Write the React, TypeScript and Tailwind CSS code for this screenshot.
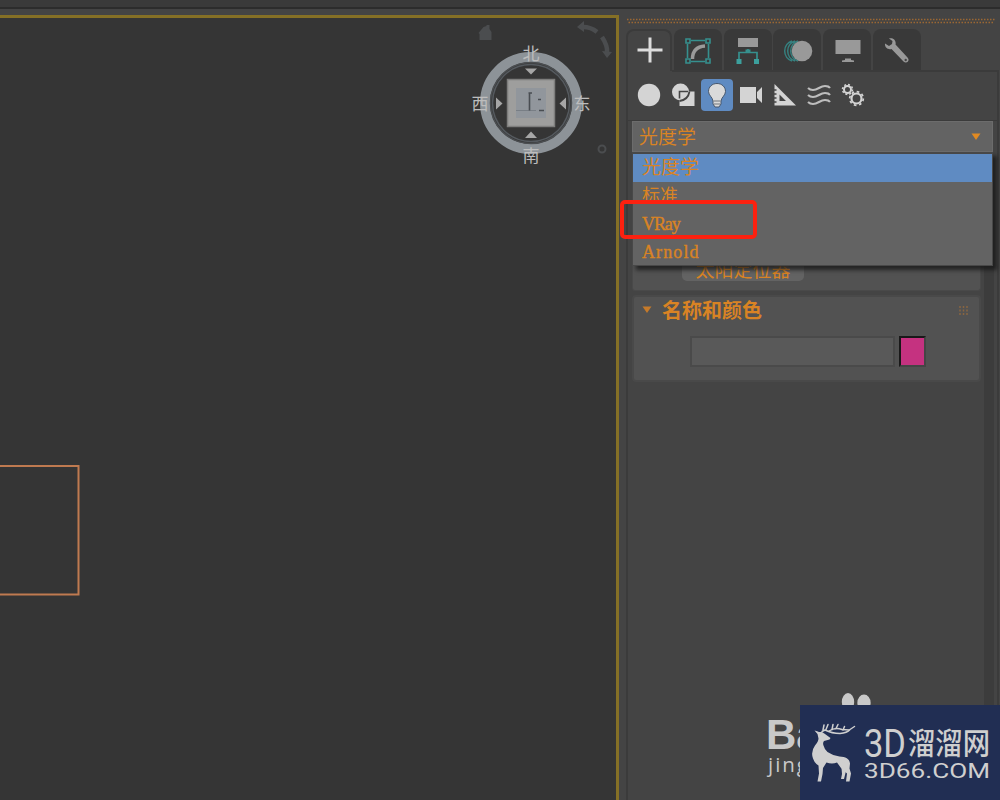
import type { ReactNode } from "react";

const LIGHT_TYPES = [
  { name: "光度学", className: "bg-[#5f8bc2] text-[19px]" },
  { name: "标准", className: "text-[18px]" },
  { name: "VRay", className: "text-[18px] tracking-[-1.1px] [-webkit-text-stroke:0.4px_#d98324]" },
  { name: "Arnold", className: "text-[18px] tracking-[1.1px] [-webkit-text-stroke:0.4px_#d98324]" },
];

function Viewport() {
  return (
    <main className="w-[619px] shrink-0 border-t-[3px] border-r-[3px] border-[#857026] bg-[#353535]">
      <svg width="616" height="782" viewBox="0 18 616 782" className="block">
        <path d="M-4 466H78.5V594.5H-4" fill="none" stroke="#bf7a50" strokeWidth="2" />

        {/* home */}
        <path d="M478.500 33l5-6 3-1v-1h3v4l2 3v8h-12v-6z" fill="#4b4d4f" />
        {/* roll arrows */}
        <g fill="none" stroke="#4b4d4f" strokeWidth="4.500">
          <path d="M583 27q8 0 14 5" />
          <path d="M602 37q6 9 5 16" />
        </g>
        <path d="M577 27l7-6v11zM602 51l10 1-5 6z" fill="#4b4d4f" />
        <circle cx="602" cy="149" r="3.500" fill="none" stroke="#4b4d4f" strokeWidth="2" />

        {/* compass ring */}
        <circle cx="531" cy="103" r="46" fill="none" stroke="#8d9398" strokeWidth="10" />
        <circle cx="531" cy="103" r="40.500" fill="none" stroke="#4b4e51" strokeWidth="1.500" />
        <circle cx="531" cy="103" r="38.500" fill="none" stroke="#555a5f" strokeWidth="1.500" />
        <g fill="#a6a6a6">
          <path d="M525 68.500h12l-6 6z" />
          <path d="M525 138h12l-6-6.500z" />
          <path d="M496 97.500v12l6.500-6z" />
          <path d="M566 97.500v12l-6.500-6z" />
        </g>
        <rect x="507.500" y="79.500" width="47" height="47" fill="#9e9e9d" stroke="#7e7e7d" strokeWidth="1.500" />
        <rect x="516" y="88" width="30" height="30" fill="#91969c" />
        <path d="M516 110.500h20" stroke="#787e85" />
        <path d="M529.500 92.500v18M528.500 93h3.500" stroke="#494d52" strokeWidth="1.600" />
        <path d="M538 99.500h3M539 110.500h5" stroke="#494d52" strokeWidth="1.600" />

        <g
          fill="#bdbdbd"
          fontSize="17"
          textAnchor="middle"
          fontFamily="'Liberation Sans', 'Noto Sans CJK SC', sans-serif"
        >
          <text x="531" y="60">北</text>
          <text x="480" y="110">西</text>
          <text x="582" y="110">东</text>
          <text x="531" y="162">南</text>
        </g>
      </svg>
    </main>
  );
}

function Tab({ children }: { children: ReactNode }) {
  return (
    <div className="flex h-[41px] w-[48px] items-center justify-center rounded-t-lg bg-[#393939] pt-[2px] pl-px">
      {children}
    </div>
  );
}

function Tabs() {
  return (
    <div className="flex h-[41px] gap-[1.8px]">
      <div className="flex h-[42px] w-[46px] items-center justify-center rounded-t-lg border-2 border-b-0 border-[#3b3b3b] bg-[#444] pr-px pb-[3px] pl-[2px]">
        <svg width="26" height="26" viewBox="0 0 26 26">
          <path d="M13 .5v25M.5 13h25" stroke="#dcdcdc" strokeWidth="3" />
        </svg>
      </div>
      <Tab>
        <svg width="26" height="26" viewBox="0 0 26 26" fill="none">
          <path d="M2.500 6v14M23.500 6v14M6 2.500h14M6 23.500h14" stroke="#36908e" strokeWidth="1.600" />
          <g fill="#39393a" stroke="#36908e" strokeWidth="1.600">
            <path d="M1 1h4v4H1zM21 1h4v4h-4zM1 21h4v4H1zM21 21h4v4h-4z" />
          </g>
          <path d="M7.500 21C7.500 13 12 8.500 20 8" stroke="#9a9a9a" strokeWidth="3.500" />
        </svg>
      </Tab>
      <Tab>
        <svg width="24" height="26" viewBox="0 0 24 26">
          <path d="M2 0h20v9H2z" fill="#999" />
          <path d="M12 11v4M3 22v-7.500h18V22" fill="none" stroke="#36908e" strokeWidth="1.700" />
          <path d="M.5 21h5v5h-5zM18 21h5v5h-5z" fill="#3ca09d" />
          <path d="M9.500 11.500h5v3.500h-5z" fill="#36908e" />
        </svg>
      </Tab>
      <Tab>
        <svg width="30" height="24" viewBox="0 0 30 24">
          <path d="M9 2a10.500 10.500 0 0 0 0 20M12 2a10.500 10.500 0 0 0 0 20M15 2a10.500 10.500 0 0 0 0 20" fill="none" stroke="#36807f" strokeWidth="1.500" />
          <circle cx="19" cy="12" r="10.300" fill="#999" />
        </svg>
      </Tab>
      <Tab>
        <svg width="26" height="24" viewBox="0 0 26 24">
          <path d="M.5 1h25v14H.5zM10 19.500h6v1.500l3 .5v1.500H7v-1.500l3-.5z" fill="#999" />
        </svg>
      </Tab>
      <Tab>
        <svg width="26" height="26" viewBox="0 0 26 26">
          <path d="M5 .5c4-1 7.500 2 6.500 6l12 13c3 3-1 7-4 4l-12-12.500c-3.500 1-7-1.500-6.500-5.500l4 2.500 3-2 .5-3z" fill="#999" />
          <circle cx="21.700" cy="22" r="1.200" fill="#444" />
        </svg>
      </Tab>
    </div>
  );
}

function Toolbar() {
  return (
    <div className="flex h-[48px] items-center pb-[3px] pl-[4px]">
      <div className="flex w-[34px] justify-center">
        <svg width="24" height="24" viewBox="0 0 24 24">
          <circle cx="12" cy="12" r="11.200" fill="#d4d4d4" />
        </svg>
      </div>
      <div className="flex w-[34px] justify-center">
        <svg width="24" height="24" viewBox="0 0 24 24">
          <circle cx="9.500" cy="9" r="8.500" fill="#d4d4d4" />
          <path d="M8.500 8.500h15V23h-15z" fill="#d4d4d4" />
          <path d="M8.500 15.500v-7h8.500" fill="none" stroke="#444" strokeWidth="1.600" />
          <path d="M8.500 18q8.500-1 10-9.500" fill="none" stroke="#444" strokeWidth="1.800" />
        </svg>
      </div>
      <div className="flex w-[34px] justify-center">
        <div className="flex h-[32px] w-[32px] items-center justify-center rounded-[4px] bg-[#5f8bc2]">
          <svg width="22" height="26" viewBox="0 0 22 26">
            <path
              d="M11 1.500c-5 0-8.500 3.500-8.500 8 0 4 4 5.500 4.500 9.500v3l2 3h4l2-3v-3c.5-4 4.500-5.500 4.500-9.500 0-4.500-3.500-8-8.500-8z"
              fill="#dadada"
              stroke="#46576d"
              strokeWidth="1"
            />
            <path d="M7.500 19h7M8 22h6" stroke="#6f747b" strokeWidth="1" />
          </svg>
        </div>
      </div>
      <div className="flex w-[34px] justify-center">
        <svg width="24" height="20" viewBox="0 0 24 20">
          <path d="M1 2h16v16H1zM18 7l5-5v16l-5-5z" fill="#d4d4d4" />
        </svg>
      </div>
      <div className="flex w-[34px] justify-center">
        <svg width="24" height="24" viewBox="0 0 24 24">
          <path d="M1.500 1L23 22.500H1.500zM6.500 11.500v6.500h6.500z" fill="#d4d4d4" fillRule="evenodd" />
          <path d="M1 7h2.500M1 11h2.500M1 15h2.500M1 19h2.500" stroke="#444" strokeWidth="1.300" />
        </svg>
      </div>
      <div className="flex w-[34px] justify-center">
        <svg width="24" height="22" viewBox="0 0 24 22" fill="none" stroke="#bdbdbd" strokeWidth="2.100">
          <path d="M1 4q2 2 5 2c5 0 7-4 12-4 3 0 4 .5 5 2" />
          <path d="M1 11q2 2 5 2c5 0 7-4 12-4 3 0 4 .5 5 2" />
          <path d="M1 18q2 2 5 2c5 0 7-4 12-4 3 0 4 .5 5 2" />
        </svg>
      </div>
      <div className="flex w-[34px] justify-center">
        <svg width="24" height="24" viewBox="0 0 24 24" fill="none" stroke="#d4d4d4">
          <circle cx="6.500" cy="6.500" r="3.500" strokeWidth="2" />
          <circle cx="6.500" cy="6.500" r="5" strokeWidth="1.500" strokeDasharray="1.960 1.960" />
          <circle cx="15.500" cy="15.500" r="5" strokeWidth="2.200" />
          <circle cx="15.500" cy="15.500" r="6.800" strokeWidth="1.700" strokeDasharray="2.670 2.670" />
        </svg>
      </div>
    </div>
  );
}

function Dropdown() {
  return (
    <div className="relative z-10 ml-[5px] w-[361px] font-['Liberation_Serif','Noto_Sans_CJK_SC',serif] text-[#d98324]">
      <div className="flex h-[31px] items-center justify-between border border-[#6c6c6c] bg-[#636363] pr-[11px] pl-[6px] text-[19px]">
        <span className="pt-[3px]">光度学</span>
        <svg width="10" height="8" viewBox="0 0 10 8">
          <path d="M.5 .5h9L5 7z" fill="#e18a22" />
        </svg>
      </div>
      <div className="h-[114px] border border-t-2 border-[#484848] bg-[#636363] shadow-[4px_4px_4px_rgba(20,20,20,0.75)]">
        {LIGHT_TYPES.map((t) => (
          <div key={t.name} className={`flex h-[28px] items-center overflow-hidden pl-[9px] leading-[28px] ${t.className}`}>
            {t.name}
          </div>
        ))}
      </div>
      {/* highlighted choice */}
      <div className="absolute top-[79px] left-[-12px] h-[39px] w-[137px] rounded-[5px] border-[4.500px] border-[#fc2110]" />
    </div>
  );
}

function Rollouts() {
  return (
    <div className="flex flex-1 justify-between pr-[3px] pl-[5px] font-['Noto_Sans_CJK_SC',sans-serif] text-[#d98324]">
      <div className="w-[349px]">
        <div className="flex h-[25px] justify-start rounded-b-[3px] border border-t-0 border-[#494949] bg-[#525252] pl-[49px]">
          <div className="-mt-[4px] flex h-[19px] w-[122px] items-end justify-center rounded-b-[5px] bg-[#636363] pb-[2px] text-[19px] leading-[20px]">
            太阳定位器
          </div>
        </div>
        <section className="mt-[4px] h-[87px] rounded-[4px] border-2 border-[#494949] bg-[#525252]">
          <div className="flex h-[31px] items-center pb-[5px] pl-[8px]">
            <svg width="10" height="8" viewBox="0 0 10 8">
              <path d="M.5 .5h9L5 7z" fill="#c57a2a" />
            </svg>
            <h2 className="ml-[10px] text-[20px] leading-[30px] font-bold">名称和颜色</h2>
            <svg width="9" height="9" viewBox="0 0 9 9" className="mr-[11px] ml-auto">
              <path d="M1 0v9M4.500 0v9M8 0v9" stroke="#886541" strokeWidth="1.500" strokeDasharray="2 1.500" />
            </svg>
          </div>
          <div className="mt-[8px] ml-[56px] flex gap-[4px]">
            <div className="h-[31px] w-[205px] border-2 border-[#4a4a4a] bg-[#595959]" />
            <div className="h-[31px] w-[27px] border-2 border-t-[#191919] border-r-[#454545] border-b-[#454545] border-l-[#191919] bg-[#c53280]" />
          </div>
        </section>
      </div>
      <div className="w-[10px] bg-[#3c3c3c]" />
    </div>
  );
}

function Watermark() {
  return (
    <svg
      width="245"
      height="120"
      viewBox="755 680 245 120"
      className="absolute right-0 bottom-0"
    >
      <g fill="#c9c9c9">
        <ellipse cx="848" cy="702" rx="6.200" ry="9" />
        <ellipse cx="864" cy="703" rx="6.700" ry="8.500" />
        <text x="766" y="748.500" fontSize="42" fontWeight="700" fontFamily="'Liberation Sans', sans-serif">
          Ba
        </text>
        <text x="768" y="772" fontSize="20.500" fontWeight="500" fontFamily="'Open Sans', sans-serif" textLength="40">
          jing
        </text>
      </g>
      <rect x="800" y="705" width="200" height="95" fill="#212e53" />
      <g fill="#cfcfcf">
        {/* deer */}
        <path d="M814.500 730.500q3 .500 4.500 1.500h3l3 2 5.500 4-1 1.500-5.500 1.500q-1.500 2-.5 4.500 1 4 4 6.500 5 3.500 12 4.500c6 .5 10 2 10.500 7l-.5 5 1.500 5-1.500 8h-3.500l1-8-6-5.500-4-5.500q-5 2-10.500 0l-3.500 5.500-.5 6-1.500 7.500h-3.500l1.500-8-.5-8q-4-2.500-5.500-7-2.500-7 2-13 3.500-4 3.500-7l-1-4.500z" />
        <path d="M839 762l9 1-1.500 6-1.500 6-1 4h-3l1-5-.5-6z" />
        <g fill="none" stroke="#cfcfcf" strokeWidth="1.500" strokeLinecap="round" strokeLinejoin="round">
          <path d="M822 731.500l3-1.500q7 3.500 15 3.500 7-.500 10-4l4.500-3" />
          <path d="M823 730l1-5M826 729.500l2-5M829 731q6-4 13-1.500l7 .5" />
          <path d="M832 729.500l1-5M836 728.500l2-4M843 730l1.500-3.500" />
        </g>
        <text
          x="864"
          y="756.500"
          fontSize="39.500"
          fontWeight="400"
          fontFamily="Roboto, sans-serif"
          textLength="42"
          lengthAdjust="spacingAndGlyphs"
        >
          3D
        </text>
        <text
          x="908"
          y="754"
          fontSize="30"
          fontWeight="500"
          fontFamily="'Noto Sans CJK SC', sans-serif"
          textLength="82"
          lengthAdjust="spacingAndGlyphs"
        >
          溜溜网
        </text>
        <text
          x="864"
          y="778"
          fontSize="21"
          fontFamily="Roboto, sans-serif"
          textLength="126"
          lengthAdjust="spacingAndGlyphs"
        >
          3D66.COM
        </text>
      </g>
    </svg>
  );
}

export default function App() {
  return (
    <div className="relative flex h-[800px] w-[1000px] flex-col overflow-hidden bg-[#444]">
      <header className="h-[15px] shrink-0">
        <div className="h-[9px] border-b-2 border-[#2c2c2c] bg-[#3a3a3a]" />
      </header>
      <div className="flex flex-1">
        <Viewport />
        <aside className="flex w-[381px] flex-col pl-[7px]">
          {/* drag handle */}
          <svg width="370" height="7" className="mt-[3px] shrink-0">
            <path d="M1 1.500h368" stroke="#9b6733" strokeWidth="1.500" strokeDasharray="1.500 1.500" />
            <path d="M2.500 4.500h366" stroke="#9b6733" strokeWidth="1.500" strokeDasharray="1.500 1.500" />
          </svg>
          <div className="mt-[4px] flex flex-1 flex-col">
            <Tabs />
            <div className="flex w-[373px] flex-1 flex-col border-x-2 border-[#3b3b3b]">
              <div className="ml-[44px] h-[2px] bg-[#3b3b3b]" />
              <Toolbar />
              <div className="h-px bg-[#3b3b3b]" />
              <div className="-ml-[1px] flex flex-1 flex-col">
                <Dropdown />
                <Rollouts />
              </div>
            </div>
          </div>
        </aside>
      </div>
      <Watermark />
    </div>
  );
}
